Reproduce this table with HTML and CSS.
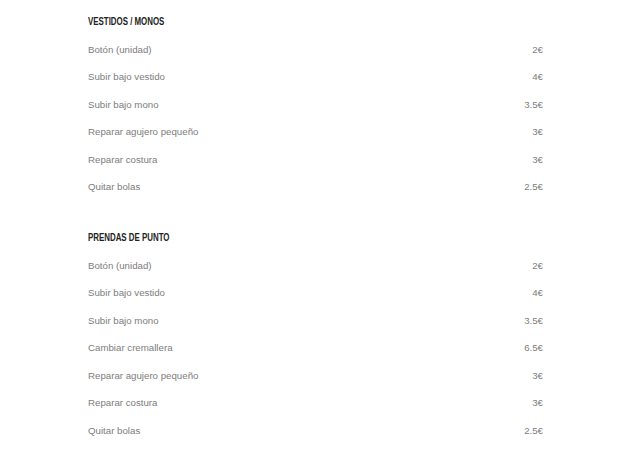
FILE: index.html
```html
<!DOCTYPE html>
<html lang="es">
<head>
<meta charset="utf-8">
<title>Precios</title>
<link rel="stylesheet" href="styles.css">
</head>
<body>
<main class="prices">
  <section class="group">
    <h2 class="group-title"><span class="group-label">VESTIDOS / MONOS</span></h2>
    <ul class="list">
      <li class="row"><span>Botón (unidad)</span><span>2€</span></li>
      <li class="row"><span>Subir bajo vestido</span><span>4€</span></li>
      <li class="row"><span>Subir bajo mono</span><span>3.5€</span></li>
      <li class="row"><span>Reparar agujero pequeño</span><span>3€</span></li>
      <li class="row"><span>Reparar costura</span><span>3€</span></li>
      <li class="row"><span>Quitar bolas</span><span>2.5€</span></li>
    </ul>
  </section>
  <section class="group">
    <h2 class="group-title"><span class="group-label">PRENDAS DE PUNTO</span></h2>
    <ul class="list">
      <li class="row"><span>Botón (unidad)</span><span>2€</span></li>
      <li class="row"><span>Subir bajo vestido</span><span>4€</span></li>
      <li class="row"><span>Subir bajo mono</span><span>3.5€</span></li>
      <li class="row"><span>Cambiar cremallera</span><span>6.5€</span></li>
      <li class="row"><span>Reparar agujero pequeño</span><span>3€</span></li>
      <li class="row"><span>Reparar costura</span><span>3€</span></li>
      <li class="row"><span>Quitar bolas</span><span>2.5€</span></li>
    </ul>
  </section>
</main>
</body>
</html>
```
FILE: styles.css
```css
html, body {
  margin: 0;
  padding: 0;
  background: #ffffff;
}
body {
  font-family: "Liberation Sans", Arial, sans-serif;
}
.prices {
  display: flex;
  flex-direction: column;
  gap: 23.5px;
  padding: 8px 84px 0 88px;
}
.group-title {
  margin: 0;
  height: 27.5px;
  line-height: 27.5px;
  font-family: "Liberation Sans", Arial, sans-serif;
  font-size: 10px;
  font-weight: bold;
  color: #222222;
}
.group-label {
  display: inline-block;
  transform: scaleX(0.79);
  transform-origin: left center;
  white-space: nowrap;
}
.list {
  list-style: none;
  margin: 0;
  padding: 0;
}
.row {
  display: flex;
  justify-content: space-between;
  height: 27.5px;
  line-height: 27.5px;
  font-size: 9.7px;
  color: #7d7d7d;
}
```
